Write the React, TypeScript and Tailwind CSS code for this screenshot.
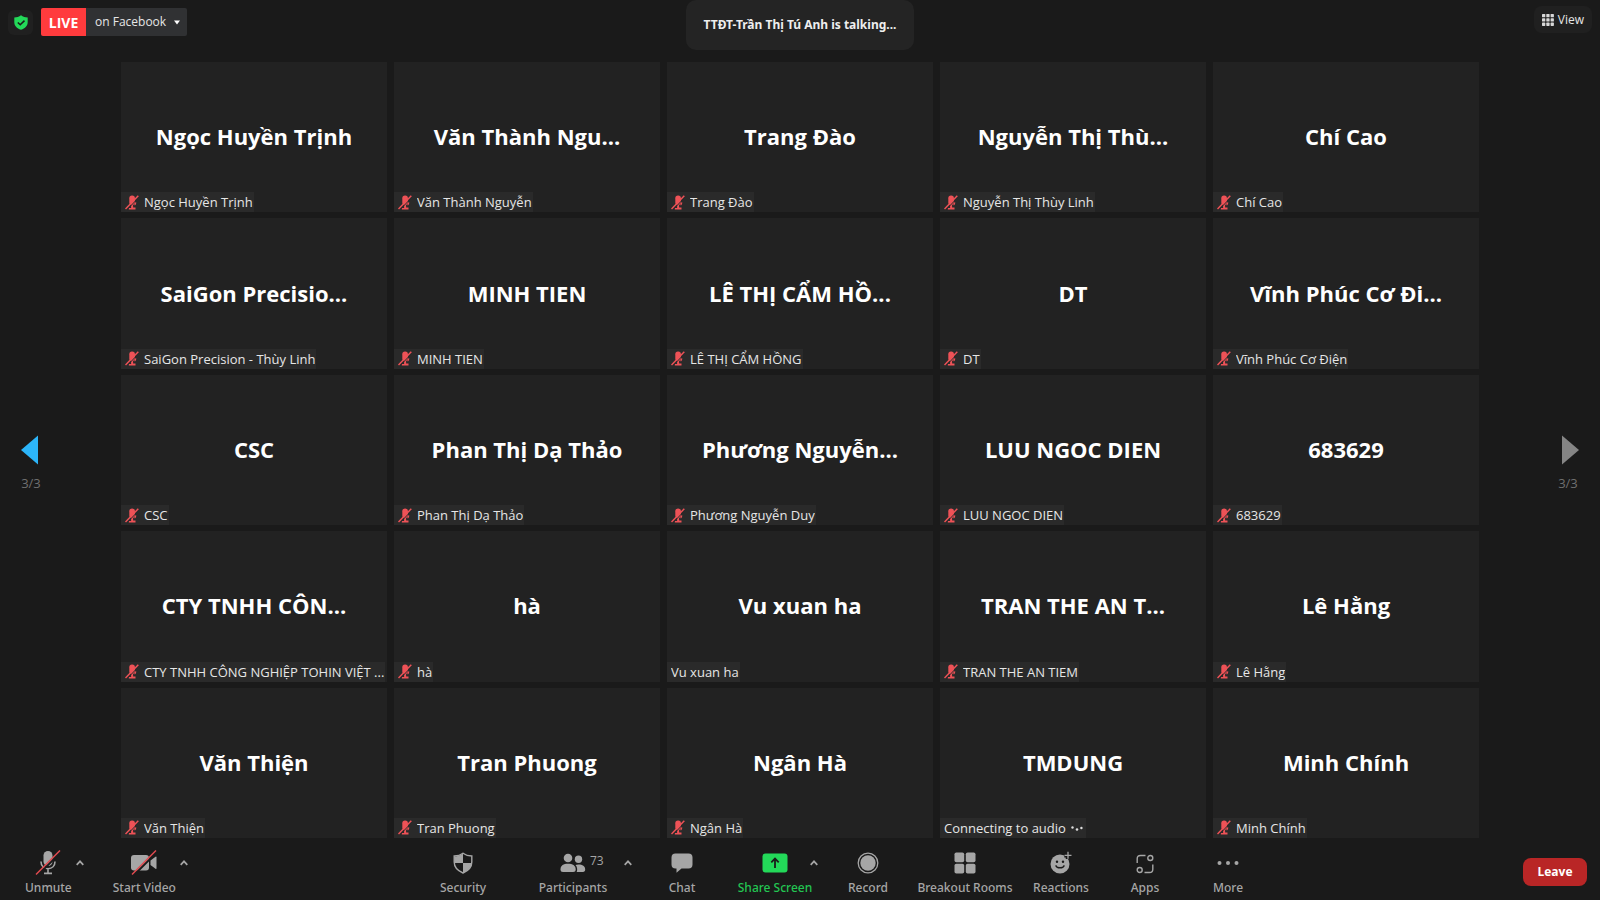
import React from "react";

type Audio = "muted" | "on" | "connecting";
type Participant = { title: string; label: string; audio?: Audio };

const participants: Participant[] = [
  { title: "Ngọc Huyền Trịnh", label: "Ngọc Huyền Trịnh" },
  { title: "Văn Thành Ngu...", label: "Văn Thành Nguyễn" },
  { title: "Trang Đào", label: "Trang Đào" },
  { title: "Nguyễn Thị Thù...", label: "Nguyễn Thị Thùy Linh" },
  { title: "Chí Cao", label: "Chí Cao" },
  { title: "SaiGon Precisio...", label: "SaiGon Precision - Thùy Linh" },
  { title: "MINH TIEN", label: "MINH TIEN" },
  { title: "LÊ THỊ CẨM HỒ...", label: "LÊ THỊ CẨM HỒNG" },
  { title: "DT", label: "DT" },
  { title: "Vĩnh Phúc Cơ Đi...", label: "Vĩnh Phúc Cơ Điện" },
  { title: "CSC", label: "CSC" },
  { title: "Phan Thị Dạ Thảo", label: "Phan Thị Dạ Thảo" },
  { title: "Phương Nguyễn...", label: "Phương Nguyễn Duy" },
  { title: "LUU NGOC DIEN", label: "LUU NGOC DIEN" },
  { title: "683629", label: "683629" },
  { title: "CTY TNHH CÔN...", label: "CTY TNHH CÔNG NGHIỆP TOHIN VIỆT ..." },
  { title: "hà", label: "hà" },
  { title: "Vu xuan ha", label: "Vu xuan ha", audio: "on" },
  { title: "TRAN THE AN T...", label: "TRAN THE AN TIEM" },
  { title: "Lê Hằng", label: "Lê Hằng" },
  { title: "Văn Thiện", label: "Văn Thiện" },
  { title: "Tran Phuong", label: "Tran Phuong" },
  { title: "Ngân Hà", label: "Ngân Hà" },
  { title: "TMDUNG", label: "Connecting to audio", audio: "connecting" },
  { title: "Minh Chính", label: "Minh Chính" },
];

function MutedMic() {
  return (
    <svg className="shrink-0" width="14" height="15" viewBox="0 0 14 15" aria-hidden="true">
      <g fill="#ee5257">
        <rect x="4.300" y="0.500" width="5.600" height="9.500" rx="2.700" />
        <path d="M6.100 9.500h2v3h2.400v1.900H3.800v-1.500h2.300z" />
      </g>
      <path d="M9.600 10.200c.7-.6 1.100-1.500 1.200-2.800" fill="none" stroke="#ee5257" strokeWidth="1.100" />
      <path d="M1.900 14.800L14 2.300" stroke="#2a2a2a" strokeWidth="1" />
      <path d="M.5 14L13.300.8" stroke="#ee5257" strokeWidth="1.500" />
    </svg>
  );
}

function Tile({ title, label, audio = "muted" }: Participant) {
  return (
    <article className="grid min-h-28 min-w-0 grid-cols-1 grid-rows-1 bg-[#222222]">
      <h2 className="col-start-1 row-start-1 self-center truncate pb-0.5 text-center text-[22px] leading-8 font-bold text-white">
        {title}
      </h2>
      <div className="col-start-1 row-start-1 flex h-5 max-w-full items-center gap-[5px] self-end justify-self-start bg-[#2a2a2a] pr-px pl-1 text-[13px] leading-5 text-[#e6e6e6]">
        {audio === "muted" && <MutedMic />}
        <span className="truncate">{label}</span>
        {audio === "connecting" && (
          <svg className="mr-0.5 shrink-0" width="12" height="6" viewBox="0 0 12 6" fill="#dddddd" aria-hidden="true">
            <circle cx="1.500" cy="2.500" r="1.200" />
            <circle cx="6" cy="4.500" r="1.300" />
            <circle cx="10.400" cy="3" r="1.200" />
          </svg>
        )}
      </div>
    </article>
  );
}

const MicIcon = () => (
  <svg width="26" height="26" viewBox="0 0 26 26" aria-hidden="true">
    <rect x="8.500" y="1" width="9" height="15" rx="4.500" fill="#a6a6a6" />
    <path d="M6 11.500c0 4.500 3 7.200 7 7.200s7-2.700 7-7.200M13 18.700v4.500M9 23.400h8" fill="none" stroke="#a6a6a6" strokeWidth="1.600" />
    <path d="M2.500 25.500L26 2" stroke="#1a1a1a" strokeWidth="2" />
    <path d="M1 24.500L25 .5" stroke="#e04a4f" strokeWidth="1.500" />
  </svg>
);

const VideoIcon = () => (
  <svg width="28" height="26" viewBox="0 0 28 26" aria-hidden="true">
    <rect x="1" y="5" width="18" height="15.500" rx="3" fill="#a6a6a6" />
    <path d="M20.500 10.500l5-3.800q1-.6 1 .5v11q0 1.200-1 .5l-5-3.700z" fill="#a6a6a6" />
    <path d="M3.500 25.500L27 2" stroke="#1a1a1a" strokeWidth="2" />
    <path d="M2 24.500L26 .5" stroke="#e04a4f" strokeWidth="1.500" />
  </svg>
);

const SecurityIcon = () => (
  <svg width="20" height="22" viewBox="0 0 20 22" aria-hidden="true">
    <path d="M10 1.200c2.500 1.900 5.500 2.700 8.800 2.800v6c0 5-3.500 8.800-8.800 11-5.300-2.200-8.800-6-8.800-11V4C4.500 3.900 7.500 3.100 10 1.200z" fill="none" stroke="#a6a6a6" strokeWidth="1.400" />
    <path d="M10 1.500V11H1.300V4.500C5 4.200 7.500 3.300 10 1.500zM10 11h8.700c-.4 4.500-3.700 7.800-8.700 9.800z" fill="#a6a6a6" />
  </svg>
);

const PeopleIcon = () => (
  <svg width="26" height="20" viewBox="0 0 26 20" fill="#a6a6a6" aria-hidden="true">
    <circle cx="8" cy="5" r="4.300" />
    <circle cx="18.500" cy="6.200" r="3.700" />
    <path d="M.5 16.500c0-4 3-5.700 7.500-5.700s7.700 1.700 7.700 5.700c0 1.700-.9 2.500-2.500 2.500H3c-1.600 0-2.500-.8-2.500-2.500z" />
    <path d="M15.500 12c.8-.4 1.800-.6 3-.6 4 0 6.700 1.600 6.700 5.200 0 1.600-.8 2.400-2.200 2.400h-6.300c.9-2.300.6-5-1.200-7z" />
  </svg>
);

const ChatIcon = () => (
  <svg width="22" height="20" viewBox="0 0 22 20" aria-hidden="true">
    <path d="M4.500.5h13q4 0 4 4v7q0 4-4 4h-7L5.500 19.700v-4.200h-1q-4 0-4-4v-7q0-4 4-4z" fill="#a6a6a6" />
  </svg>
);

const ShareIcon = () => (
  <svg width="26" height="20" viewBox="0 0 26 20" aria-hidden="true">
    <rect x=".5" y=".5" width="25" height="19" rx="3" fill="#23d959" />
    <path d="M13 15V6M9.300 9.300L13 5.600l3.700 3.700" fill="none" stroke="#1a1a1a" strokeWidth="1.800" />
  </svg>
);

const RecordIcon = () => (
  <svg width="22" height="22" viewBox="0 0 22 22" aria-hidden="true">
    <circle cx="11" cy="11" r="9.800" fill="none" stroke="#a6a6a6" strokeWidth="1.300" />
    <circle cx="11" cy="11" r="7.700" fill="#a6a6a6" />
  </svg>
);

const RoomsIcon = () => (
  <svg width="22" height="22" viewBox="0 0 22 22" fill="#a6a6a6" aria-hidden="true">
    <rect x=".5" y=".5" width="9.700" height="9.700" rx="1.800" />
    <rect x="11.800" y=".5" width="9.700" height="9.700" rx="1.800" />
    <rect x=".5" y="11.800" width="9.700" height="9.700" rx="1.800" />
    <rect x="11.800" y="11.800" width="9.700" height="9.700" rx="1.800" />
  </svg>
);

const ReactionsIcon = () => (
  <svg width="22" height="24" viewBox="0 0 22 24" aria-hidden="true">
    <circle cx="10" cy="13" r="9.500" fill="#a6a6a6" />
    <path d="M18 .5v7.500M14.300 4.300h7.500" stroke="#1a1a1a" strokeWidth="4.500" />
    <path d="M18 .8v7M14.500 4.300h7" stroke="#a6a6a6" strokeWidth="1.300" />
    <g fill="#1a1a1a">
      <circle cx="7" cy="10.800" r="1.200" />
      <circle cx="13" cy="10.800" r="1.200" />
    </g>
    <path d="M5.800 14.300c.8 3.400 7.600 3.400 8.400 0" fill="none" stroke="#1a1a1a" strokeWidth="1.500" />
  </svg>
);

const AppsIcon = () => (
  <svg className="mt-0.5" width="18" height="20" viewBox="0 0 18 20" fill="none" stroke="#a6a6a6" strokeWidth="1.400" aria-hidden="true">
    <path d="M1.200 9V4.800q0-3.300 3.300-3.300h5M16.800 10.500v4.700q0 3.300-3.300 3.300h-5" />
    <circle cx="14.300" cy="4" r="2.500" />
    <circle cx="3.700" cy="16" r="2.500" />
  </svg>
);

const MoreIcon = () => (
  <svg width="22" height="6" viewBox="0 0 22 6" fill="#a6a6a6" aria-hidden="true">
    <circle cx="2.500" cy="3" r="2" />
    <circle cx="11" cy="3" r="2" />
    <circle cx="19.500" cy="3" r="2" />
  </svg>
);

type ToolProps = { label: string; icon: React.ReactNode; green?: boolean; count?: number };

function Tool({ label, icon, green, count }: ToolProps) {
  return (
    <button type="button" className={`flex flex-col items-center gap-px text-[12px] leading-5 font-medium whitespace-nowrap ${green ? "text-[#23c552]" : "text-[#a6a6a6]"}`}>
      <span className="relative flex h-7 items-center justify-center">
        {icon}
        {count !== undefined && <span className="absolute top-0 left-full pl-1 text-[12px] leading-6">{count}</span>}
      </span>
      <span className="font-['Noto_Sans',sans-serif]">{label}</span>
    </button>
  );
}

function Caret({ label }: { label: string }) {
  return (
    <button type="button" aria-label={label} className="flex h-7 w-4 items-center justify-center">
      <svg width="8" height="6" viewBox="0 0 8 6" fill="none" stroke="#a6a6a6" strokeWidth="1.700" aria-hidden="true">
        <path d="M.7 4.800L4 1.300l3.300 3.500" />
      </svg>
    </button>
  );
}

function Pager({ next }: { next?: boolean }) {
  return (
    <div className={`flex w-[121px] shrink-0 items-center ${next ? "justify-end pr-4" : "justify-start pl-[15px]"}`}>
      <button type="button" aria-label={next ? "Next page" : "Previous page"} className="flex w-8 flex-col items-center gap-2 pt-7 text-[13px] leading-5 text-[#6f6f6f]">
        <svg className={next ? "ml-1" : "mr-0.5"} width="18" height="30" viewBox="0 0 18 30" aria-hidden="true">
          {next ? <path d="M1 .5L18 15 1 29.500z" fill="#858585" /> : <path d="M17 .5L0 15l17 14.500z" fill="#2cb5f9" />}
        </svg>
        3/3
      </button>
    </div>
  );
}

export default function App() {
  return (
    <div className="flex min-h-screen flex-col bg-[#1a1a1a] font-['Open_Sans','Noto_Sans',sans-serif] text-[#e6e6e6]">
      <header className="grid h-[62px] shrink-0 grid-cols-[1fr_auto_1fr] items-start">
        <div className="flex items-center gap-2 pt-2 pl-2">
          <button type="button" aria-label="Meeting information" className="flex size-[25px] items-center justify-center rounded-md bg-[#202020]">
            <svg width="14" height="15" viewBox="0 0 14 15" aria-hidden="true">
              <path d="M7 .3c2 1.500 4.200 2.200 6.700 2.200v4.800c0 3.500-2.500 6-6.700 7.500C2.800 13.300.3 10.800.3 7.300V2.500C2.800 2.500 5 1.800 7 .3z" fill="#23d959" />
              <path d="M3.800 7.500l2.400 2.300 4.300-4.200" fill="none" stroke="#1a1a1a" strokeWidth="1.500" />
            </svg>
          </button>
          <div className="flex h-7 overflow-hidden rounded-xs">
            <span className="flex w-[45px] items-center justify-center bg-[#ff3b3d] text-[14px] font-bold text-white">LIVE</span>
            <button type="button" className="flex items-center gap-2 bg-[#303133] pr-[7px] pl-[9px] text-[12px] leading-5">
              on Facebook
              <svg width="6" height="5" viewBox="0 0 6 5" fill="#ffffff" aria-hidden="true"><path d="M0 .5h6L3 4.500z" /></svg>
            </button>
          </div>
        </div>
        <p className="flex h-[50px] items-center rounded-[10px] bg-[#242424] px-[18px] font-['Noto_Sans',sans-serif] text-[12px] font-bold text-[#eeeeee]">
          TTĐT-Trần Thị Tú Anh is talking...
        </p>
        <div className="flex justify-end pt-1.5 pr-2">
          <button type="button" className="flex h-[27px] items-center gap-1 rounded-lg bg-[#202020] px-2 text-[12px]">
            <svg width="12" height="12" viewBox="0 0 12 12" fill="#d8d8d8" aria-hidden="true">
              {[0, 4.300, 8.600].map((y) => [0, 4.300, 8.600].map((x) => <rect key={`${x}-${y}`} x={x} y={y} width="3.300" height="3.300" rx=".6" />))}
            </svg>
            View
          </button>
        </div>
      </header>

      <main className="flex flex-1">
        <Pager />
        <section aria-label="Participants" className="grid min-w-0 flex-1 auto-rows-fr grid-cols-5 gap-x-[7px] gap-y-1.5">
          {participants.map((p) => <Tile key={p.title} {...p} />)}
        </section>
        <Pager next />
      </main>

      <footer className="grid h-[62px] shrink-0 grid-cols-[19fr_auto_15fr] items-start pt-[11px]">
        <div className="flex pl-[25px]">
          <Tool label="Unmute" icon={<MicIcon />} />
          <Caret label="Audio options" />
          <div className="flex pl-[25px]">
            <Tool label="Start Video" icon={<VideoIcon />} />
            <Caret label="Video options" />
          </div>
        </div>
        <div className="flex">
          <div className="flex w-[90px] justify-center"><Tool label="Security" icon={<SecurityIcon />} /></div>
          <div className="relative flex w-[130px] justify-center">
            <Tool label="Participants" icon={<PeopleIcon />} count={73} />
            <div className="absolute top-0 right-0.5"><Caret label="Participant options" /></div>
          </div>
          <div className="flex w-[88px] justify-center"><Tool label="Chat" icon={<ChatIcon />} /></div>
          <div className="relative flex w-[98px] justify-center">
            <Tool label="Share Screen" icon={<ShareIcon />} green />
            <div className="absolute top-0 right-0.5"><Caret label="Share options" /></div>
          </div>
          <div className="flex w-[88px] justify-center"><Tool label="Record" icon={<RecordIcon />} /></div>
          <div className="flex w-[106px] justify-center"><Tool label="Breakout Rooms" icon={<RoomsIcon />} /></div>
          <div className="flex w-[86px] justify-center"><Tool label="Reactions" icon={<ReactionsIcon />} /></div>
          <div className="flex w-[82px] justify-center"><Tool label="Apps" icon={<AppsIcon />} /></div>
          <div className="flex w-[84px] justify-center"><Tool label="More" icon={<MoreIcon />} /></div>
        </div>
        <div className="flex justify-end pt-[9px] pr-[13px]">
          <button type="button" className="h-7 w-16 rounded-lg bg-[#b92626] text-[12px] font-bold text-white">Leave</button>
        </div>
      </footer>
    </div>
  );
}
